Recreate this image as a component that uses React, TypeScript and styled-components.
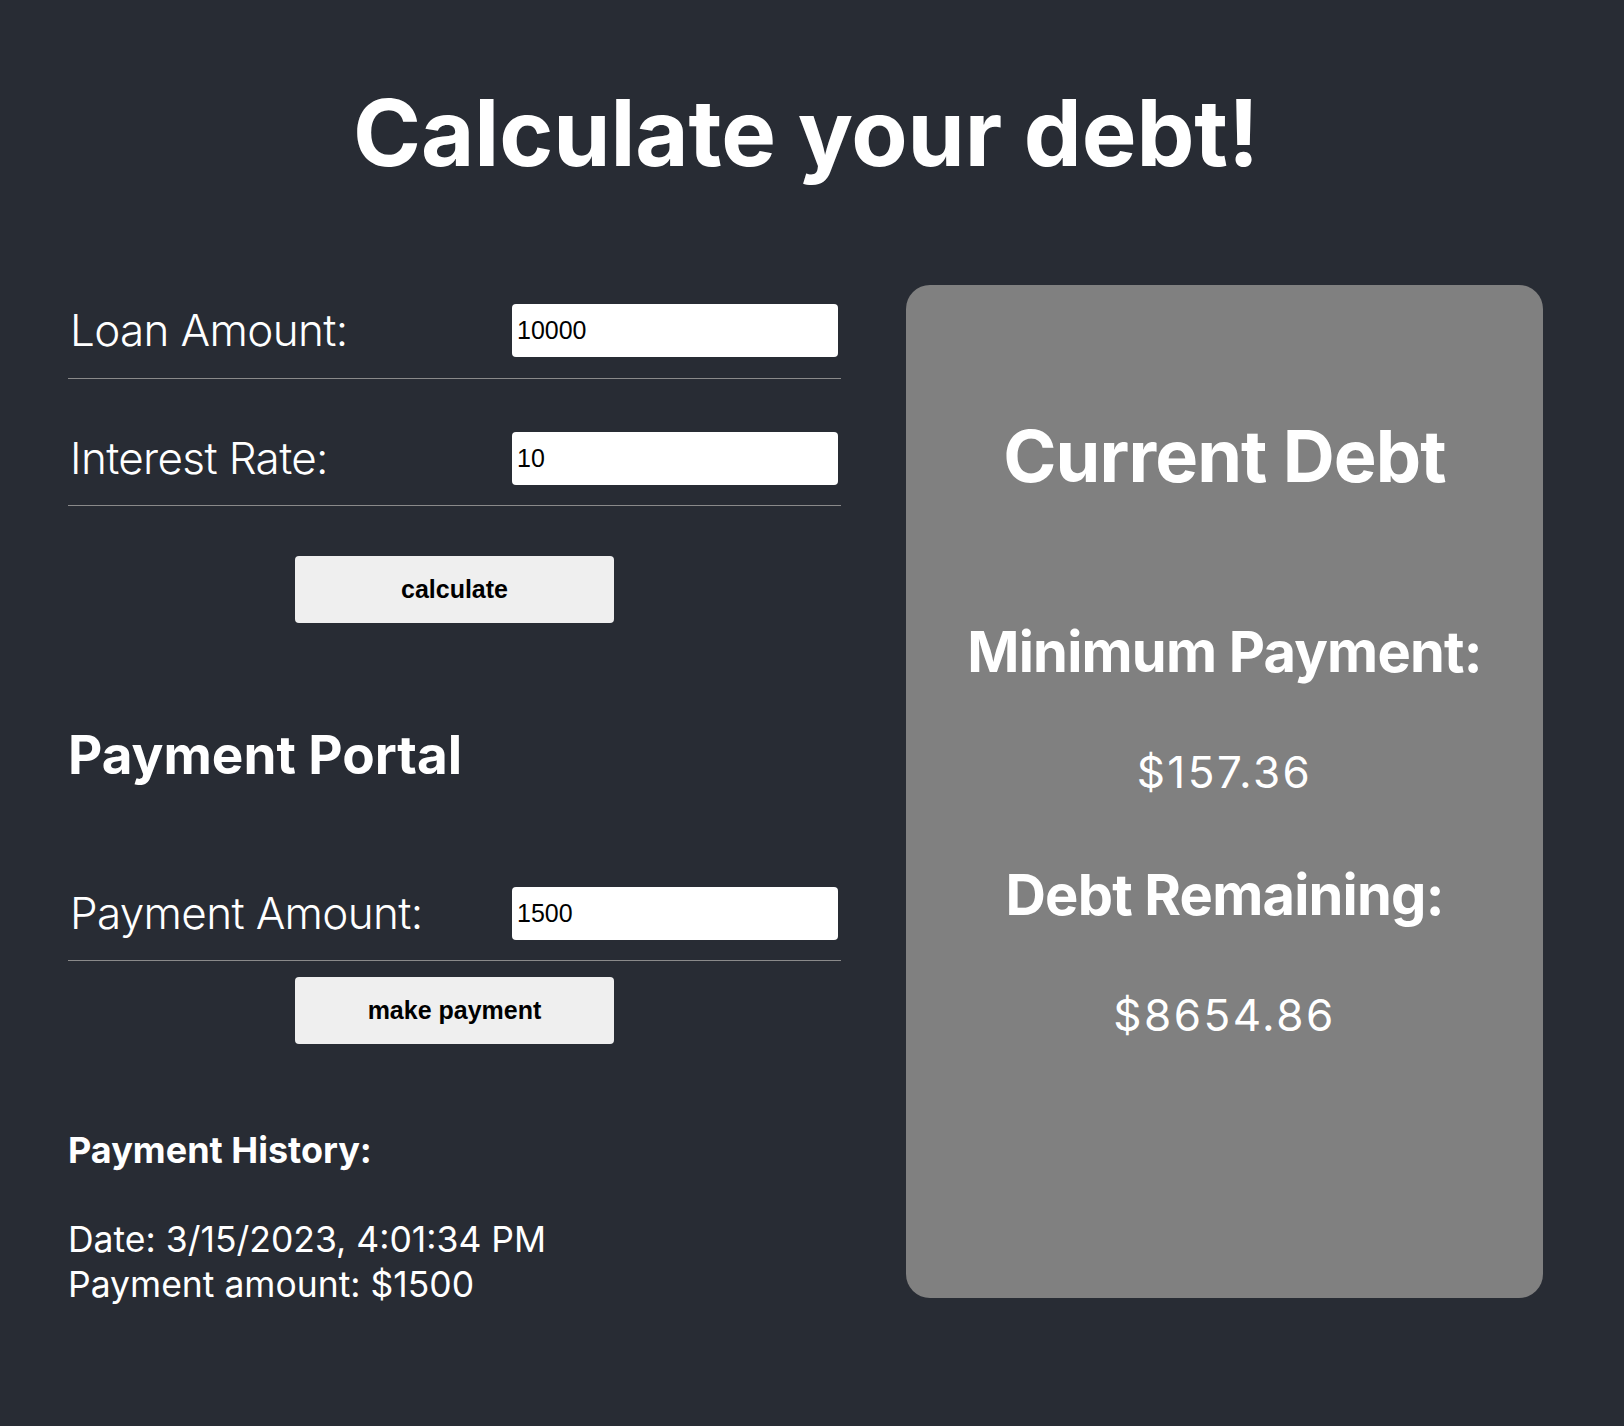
import React from "react";
import styled, { createGlobalStyle } from "styled-components";

const GlobalStyle = createGlobalStyle`
  html, body {
    margin: 0;
    padding: 0;
    background: #282c34;
  }
  body {
    min-height: 100vh;
    font-family: Inter, "Noto Sans", sans-serif;
    color: #ffffff;
  }
`;

const Page = styled.div`
  min-height: 1426px;
  background: #282c34;
  padding-top: 77px;
  box-sizing: border-box;
`;

const Title = styled.h1`
  margin: 0 0 97px;
  padding-right: 12px;
  text-align: center;
  font-size: 92px;
  font-weight: 700;
  line-height: normal;
  letter-spacing: -0.1px;
`;

const Main = styled.main`
  display: grid;
  grid-template-columns: 773px 637px;
  column-gap: 65px;
  padding: 0 81px 0 68px;
  align-items: start;
`;

const LeftColumn = styled.section`
  display: flex;
  flex-direction: column;
`;

const Row = styled.div<{ $top: number; $bottom: number }>`
  display: flex;
  align-items: center;
  justify-content: space-between;
  padding: ${(p) => p.$top}px 3px ${(p) => p.$bottom}px 0;
  border-bottom: 1px solid #8a8a8a;
`;

const Label = styled.label`
  padding-left: 2px;
  font-size: 44px;
  font-weight: 300;
  line-height: 53px;
  letter-spacing: -0.65px;
`;

const Field = styled.input`
  width: 326px;
  height: 53px;
  box-sizing: border-box;
  border: none;
  border-radius: 4px;
  background: #ffffff;
  padding: 0 5px;
  font-family: "Liberation Sans", Arial, sans-serif;
  font-size: 25px;
  color: #000000;
  outline: none;
`;

const Button = styled.button<{ $top: number }>`
  align-self: center;
  margin-top: ${(p) => p.$top}px;
  width: 319px;
  height: 67px;
  border: none;
  border-radius: 4px;
  background: #efefef;
  color: #000000;
  font-family: "Liberation Sans", Arial, sans-serif;
  font-weight: 700;
  font-size: 25px;
  cursor: pointer;
`;

const SectionTitle = styled.h2`
  margin: 100px 0 0;
  font-size: 53px;
  font-weight: 700;
  line-height: normal;
`;

const HistoryTitle = styled.h3`
  margin: 84px 0 0;
  font-size: 36px;
  font-weight: 700;
  line-height: normal;
`;

const HistoryList = styled.div`
  margin-top: 45px;
  font-size: 35.5px;
  font-weight: 400;
  line-height: 45px;
`;

const HistoryLine = styled.div``;

const Card = styled.aside`
  height: 1013px;
  box-sizing: border-box;
  padding-top: 127px;
  background: #808080;
  border-radius: 24px;
  text-align: center;
  display: flex;
  flex-direction: column;
  align-items: center;
`;

const CardTitle = styled.h2`
  margin: 0;
  font-size: 72px;
  font-weight: 700;
  line-height: normal;
  letter-spacing: -0.9px;
`;

const CardHeading = styled.h3<{ $top: number }>`
  margin: ${(p) => p.$top}px 0 0;
  font-size: 56px;
  font-weight: 700;
  line-height: normal;
  letter-spacing: -0.8px;
`;

const CardValue = styled.p`
  margin: 59px 0 0;
  font-size: 44px;
  font-weight: 400;
  line-height: normal;
  letter-spacing: 2.5px;
`;

export default function App() {
  return (
    <>
      <GlobalStyle />
      <Page>
        <Title>Calculate your debt!</Title>
        <Main>
          <LeftColumn>
            <Row $top={19} $bottom={21}>
              <Label>Loan Amount:</Label>
              <Field defaultValue="10000" />
            </Row>
            <Row $top={53} $bottom={20}>
              <Label>Interest Rate:</Label>
              <Field defaultValue="10" />
            </Row>
            <Button $top={50}>calculate</Button>

            <SectionTitle>Payment Portal</SectionTitle>
            <Row $top={100} $bottom={20}>
              <Label>Payment Amount:</Label>
              <Field defaultValue="1500" />
            </Row>
            <Button $top={16}>make payment</Button>

            <HistoryTitle>Payment History:</HistoryTitle>
            <HistoryList>
              <HistoryLine>Date: 3/15/2023, 4:01:34 PM</HistoryLine>
              <HistoryLine>Payment amount: $1500</HistoryLine>
            </HistoryList>
          </LeftColumn>

          <Card>
            <CardTitle>Current Debt</CardTitle>
            <CardHeading $top={119}>Minimum Payment:</CardHeading>
            <CardValue>$157.36</CardValue>
            <CardHeading $top={62}>Debt Remaining:</CardHeading>
            <CardValue>$8654.86</CardValue>
          </Card>
        </Main>
      </Page>
    </>
  );
}
